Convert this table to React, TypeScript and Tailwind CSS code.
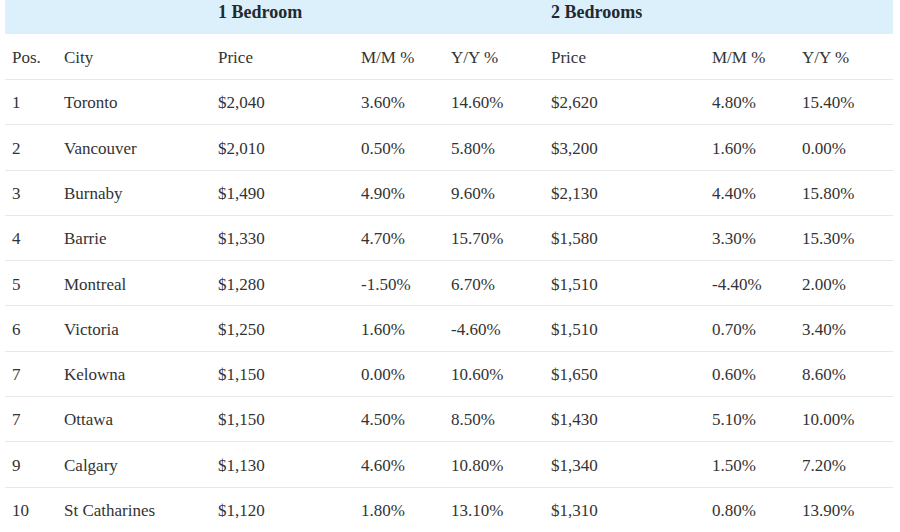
const rows = [
  ["1", "Toronto", "$2,040", "3.60%", "14.60%", "$2,620", "4.80%", "15.40%"],
  ["2", "Vancouver", "$2,010", "0.50%", "5.80%", "$3,200", "1.60%", "0.00%"],
  ["3", "Burnaby", "$1,490", "4.90%", "9.60%", "$2,130", "4.40%", "15.80%"],
  ["4", "Barrie", "$1,330", "4.70%", "15.70%", "$1,580", "3.30%", "15.30%"],
  ["5", "Montreal", "$1,280", "-1.50%", "6.70%", "$1,510", "-4.40%", "2.00%"],
  ["6", "Victoria", "$1,250", "1.60%", "-4.60%", "$1,510", "0.70%", "3.40%"],
  ["7", "Kelowna", "$1,150", "0.00%", "10.60%", "$1,650", "0.60%", "8.60%"],
  ["7", "Ottawa", "$1,150", "4.50%", "8.50%", "$1,430", "5.10%", "10.00%"],
  ["9", "Calgary", "$1,130", "4.60%", "10.80%", "$1,340", "1.50%", "7.20%"],
  ["10", "St Catharines", "$1,120", "1.80%", "13.10%", "$1,310", "0.80%", "13.90%"],
];

const headers = ["Pos.", "City", "Price", "M/M %", "Y/Y %", "Price", "M/M %", "Y/Y %"];

const cols = "grid grid-cols-[52px_154px_143px_90px_100px_161px_90px_91px]";

export default function App() {
  return (
    <div className="h-[532px] w-[900px] overflow-hidden bg-white pl-[5px] font-['Liberation_Serif',serif] text-[17px] text-[#333333]">
      <div className="w-[888px]">
        <div className={`${cols} h-[34px] bg-[#dcf0fc] pt-[1px] text-[18px] font-bold leading-[22px] text-[#222a30]`}>
          <div className="col-span-2" />
          <div className="col-span-3 pl-[7px]">1 Bedroom</div>
          <div className="col-span-3 pl-[7px]">2 Bedrooms</div>
        </div>
        <div className={`${cols} h-[46px] items-center border-b border-[#e8e8e8] pt-[2px]`}>
          {headers.map((h, i) => (
            <div key={i} className="pl-[7px]">
              {h}
            </div>
          ))}
        </div>
        {rows.map((r, ri) => (
          <div key={ri} className={`${cols} h-[45.3px] items-center border-b border-[#e8e8e8] pt-[2px]`}>
            {r.map((c, ci) => (
              <div key={ci} className="pl-[7px]">
                {c}
              </div>
            ))}
          </div>
        ))}
      </div>
    </div>
  );
}
